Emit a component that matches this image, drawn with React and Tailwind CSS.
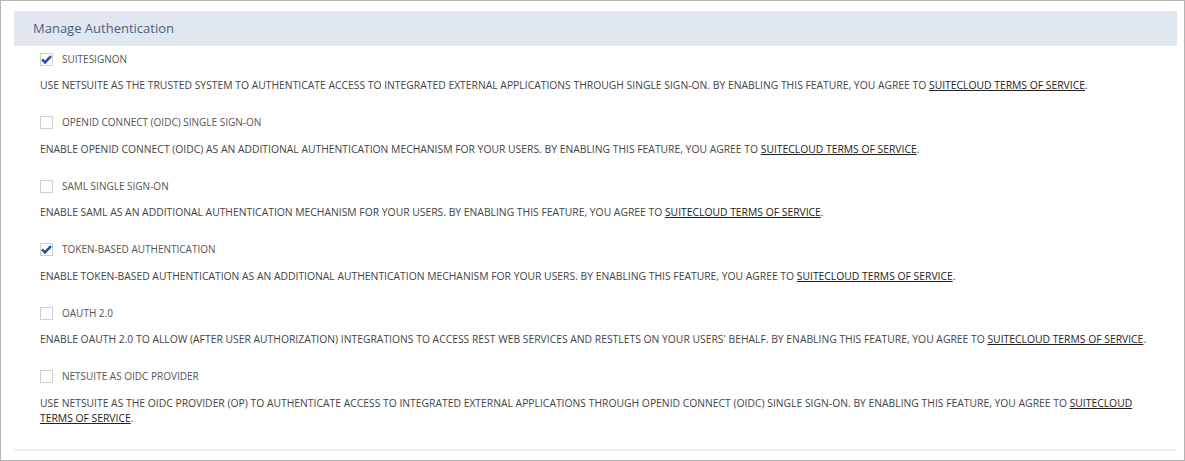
import React from 'react';

const features = [
  {
    label: 'SuiteSignOn',
    checked: true,
    text: 'Use NetSuite as the trusted system to authenticate access to integrated external applications through single sign-on. By enabling this feature, you agree to ',
  },
  {
    label: 'OpenID Connect (OIDC) Single Sign-On',
    checked: false,
    text: 'Enable OpenID Connect (OIDC) as an additional authentication mechanism for your users. By enabling this feature, you agree to ',
  },
  {
    label: 'SAML Single Sign-On',
    checked: false,
    text: 'Enable SAML as an additional authentication mechanism for your users. By enabling this feature, you agree to ',
  },
  {
    label: 'Token-based Authentication',
    checked: true,
    text: 'Enable token-based authentication as an additional authentication mechanism for your users. By enabling this feature, you agree to ',
  },
  {
    label: 'OAuth 2.0',
    checked: false,
    text: "Enable OAuth 2.0 to allow (after user authorization) integrations to access REST web services and RESTlets on your users' behalf. By enabling this feature, you agree to ",
  },
  {
    label: 'NetSuite as OIDC Provider',
    checked: false,
    text: 'Use NetSuite as the OIDC Provider (OP) to authenticate access to integrated external applications through OpenID Connect (OIDC) single sign-on. By enabling this feature, you agree to ',
  },
];

const Checkbox = ({ checked }) => (
  <span className="w-[13px] h-[13px] border border-[#cfcfcf] bg-white flex items-center justify-center shrink-0">
    {checked && (
      <svg width="11" height="9" viewBox="0 0 11 9">
        <path d="M1 4.4 L4 7.4 L10 1.2" fill="none" stroke="#24549f" strokeWidth="2.6" />
      </svg>
    )}
  </span>
);

export default function App() {
  return (
    <div
      className="w-[1185px] h-[461px] bg-white border border-[#b5b5b5] overflow-hidden"
      style={{ fontFamily: '"Open Sans", "Liberation Sans", sans-serif' }}
    >
      <div className="ml-[13px] mr-[7px] mt-[10px]">
        <div className="h-[35px] bg-[#e1e7f0] flex items-center pl-[19px]">
          <span className="text-[13px] text-[#4a5f82]">Manage Authentication</span>
        </div>
        <div className="pt-[6px] pl-[26px] pr-[29px]">
          {features.map((f) => (
            <div key={f.label} className="mb-[22.6px]">
              <div className="h-[14px] flex items-center gap-[9px]">
                <Checkbox checked={f.checked} />
                <span className="text-[10px] uppercase text-[#555]">{f.label}</span>
              </div>
              <p className="mt-[12px] text-[10.35px] leading-[15px] uppercase text-[#444]">
                {f.text}
                <span className="underline text-[#222]">SuiteCloud Terms of Service</span>.
              </p>
            </div>
          ))}
        </div>
        <div className="h-[2px] bg-[#eaeef5]" />
      </div>
    </div>
  );
}
